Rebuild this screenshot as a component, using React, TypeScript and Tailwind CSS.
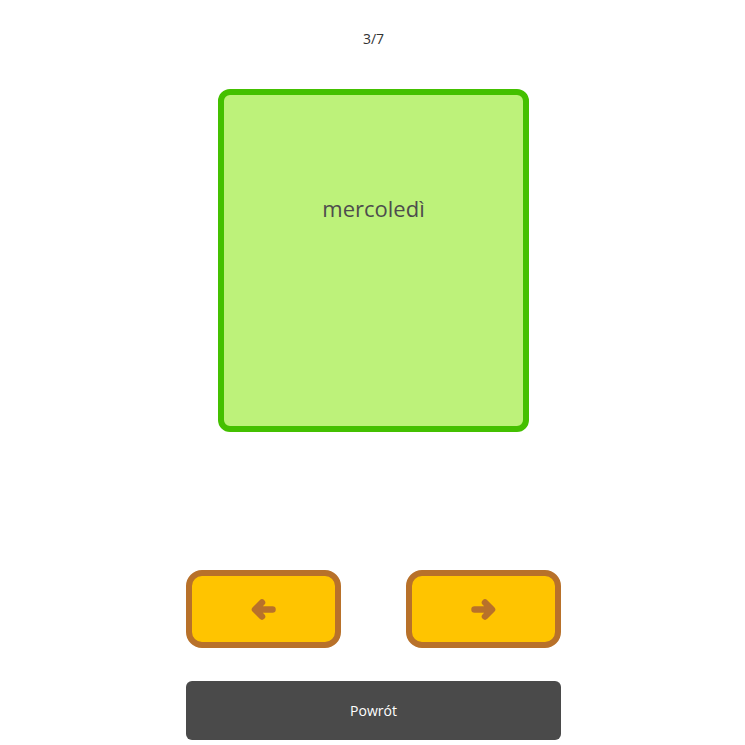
function Arrow({ dir }: { dir: 'left' | 'right' }) {
  return (
    <svg
      width="25"
      height="23"
      viewBox="0 0 25 23"
      fill="none"
      stroke="currentColor"
      strokeWidth="6.5"
      strokeLinecap="round"
      strokeLinejoin="round"
      className={dir === 'right' ? 'rotate-180' : ''}
    >
      <path d="M21.5 11.5H5M11 4.5L4 11.5L11 18.5" />
    </svg>
  );
}

export default function App() {
  return (
    <div className="min-h-screen bg-white flex flex-col items-center pl-[2px] font-['Open_Sans',sans-serif] text-[#333]">
      {/* Counter */}
      <div className="mt-[29px] h-[20px] text-[14px] leading-[20px] text-[#333]">3/7</div>

      {/* Flashcard */}
      <div className="mt-[40px] w-[311px] h-[343px] bg-[#bdf27a] border-[6px] border-[#44c000] rounded-[12px] flex justify-center">
        <p className="mt-[98px] text-[22px] leading-[30px] text-[#4d4d4d]">mercoledì</p>
      </div>

      {/* Navigation */}
      <div className="mt-[138px] w-[375px] flex justify-between">
        <button
          className="w-[155px] h-[78px] bg-[#ffc400] border-[6px] border-[#b8712a] rounded-[16px] flex items-center justify-center text-[#b8712a]"
          aria-label="Poprzednia"
        >
          <Arrow dir="left" />
        </button>
        <button
          className="w-[155px] h-[78px] bg-[#ffc400] border-[6px] border-[#b8712a] rounded-[16px] flex items-center justify-center text-[#b8712a]"
          aria-label="Następna"
        >
          <Arrow dir="right" />
        </button>
      </div>

      <button className="mt-[33px] w-[375px] h-[59px] bg-[#4a4a4a] rounded-[6px] text-white text-[14px]">
        Powrót
      </button>
    </div>
  );
}
